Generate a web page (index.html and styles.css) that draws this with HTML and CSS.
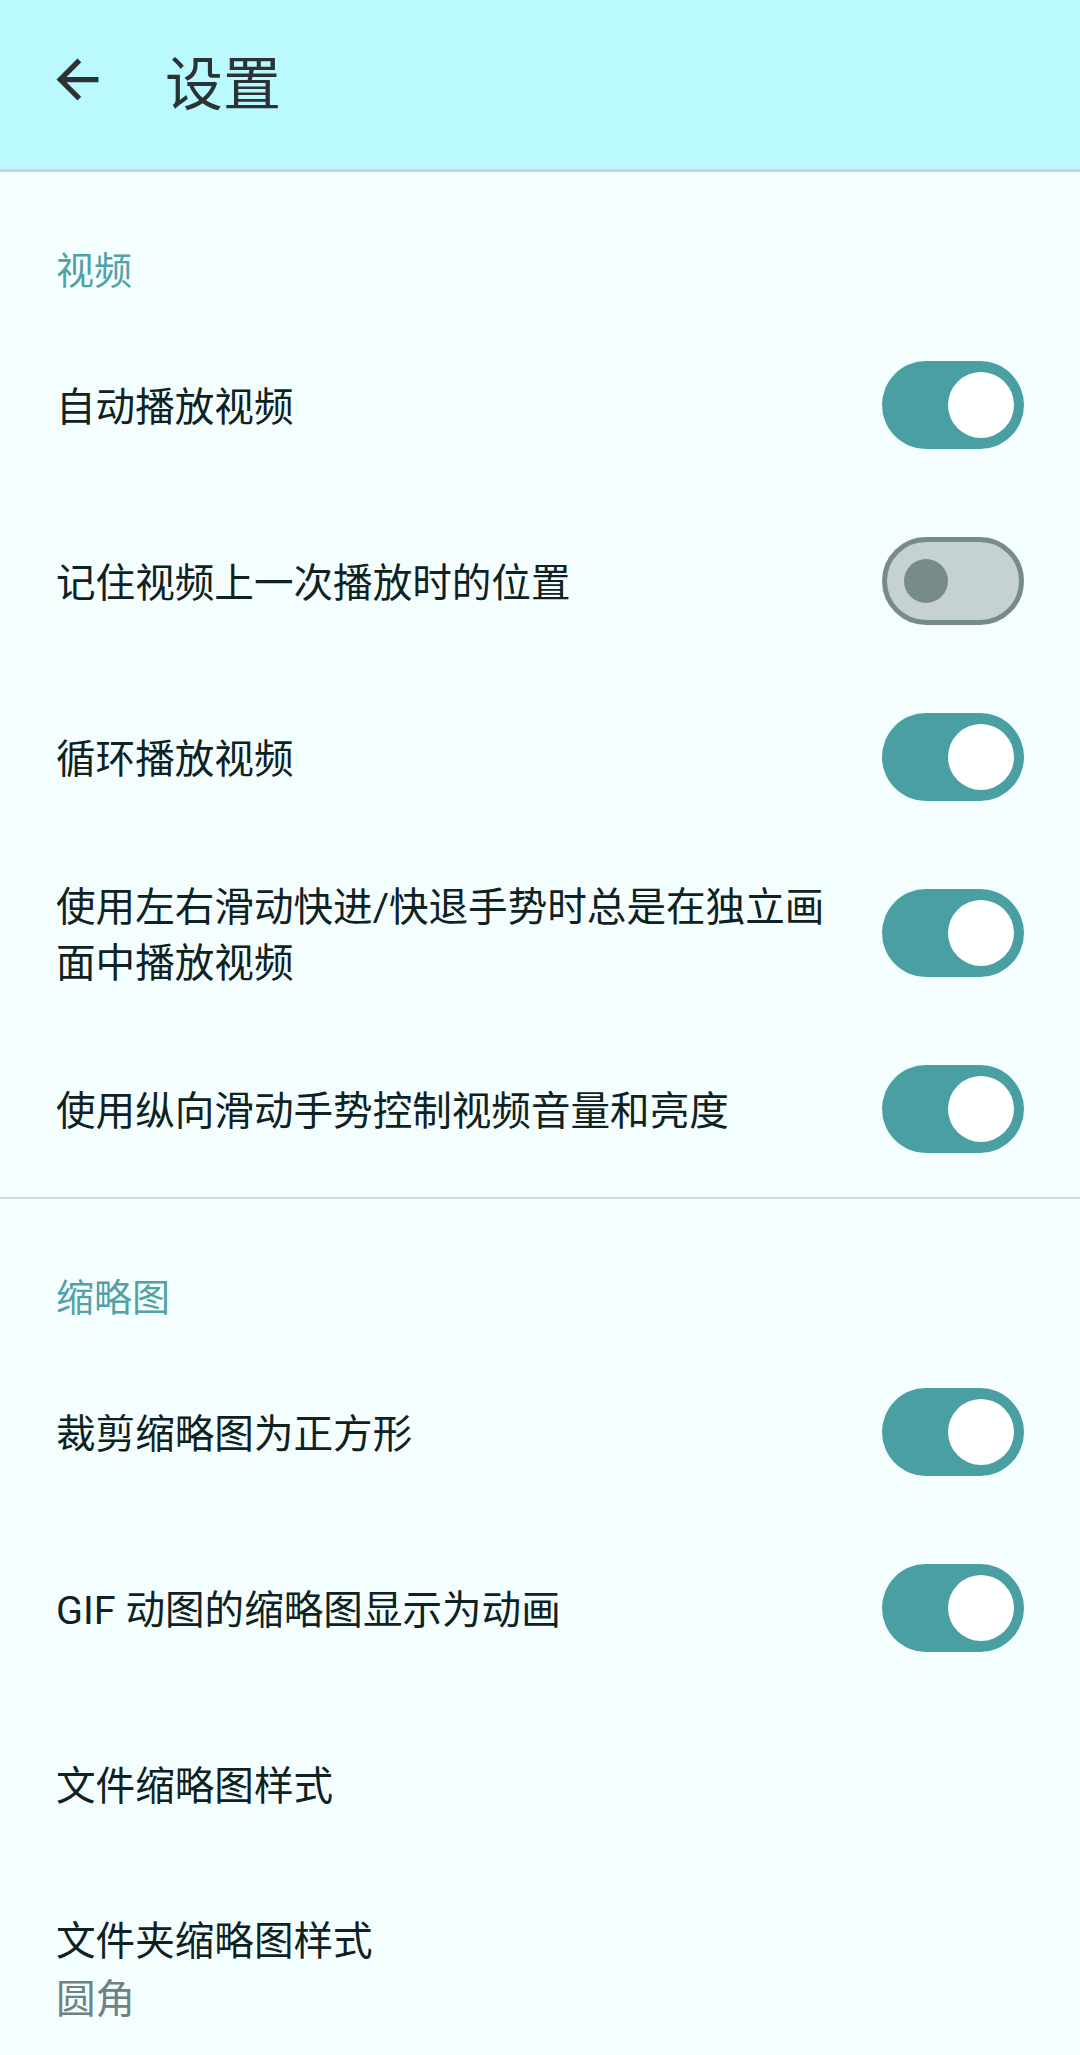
FILE: index.html
```html
<!DOCTYPE html>
<html lang="zh-CN">
<head>
    <meta charset="UTF-8">
    <meta name="viewport" content="width=device-width, initial-scale=1.0">
    <title>设置</title>
    <link rel="stylesheet" href="styles.css">
</head>
<body>
    <div class="toolbar">
        <button class="back" aria-label="返回">
            <svg viewBox="0 0 24 24" width="63" height="63"><path d="M20 11H7.83l5.59-5.59L12 4l-8 8 8 8 1.41-1.41L7.83 13H20v-2z" fill="#2d3333"/></svg>
        </button>
        <h1 class="title">设置</h1>
    </div>

    <div class="section">
        <div class="section-title">视频</div>
        <div class="row">
            <div class="label">自动播放视频</div>
            <div class="switch on"><span class="thumb"></span></div>
        </div>
        <div class="row">
            <div class="label">记住视频上一次播放时的位置</div>
            <div class="switch"><span class="thumb"></span></div>
        </div>
        <div class="row">
            <div class="label">循环播放视频</div>
            <div class="switch on"><span class="thumb"></span></div>
        </div>
        <div class="row">
            <div class="label">使用左右滑动快进/快退手势时总是在独立画面中播放视频</div>
            <div class="switch on"><span class="thumb"></span></div>
        </div>
        <div class="row">
            <div class="label">使用纵向滑动手势控制视频音量和亮度</div>
            <div class="switch on"><span class="thumb"></span></div>
        </div>
    </div>

    <div class="section">
        <div class="section-title">缩略图</div>
        <div class="row">
            <div class="label">裁剪缩略图为正方形</div>
            <div class="switch on"><span class="thumb"></span></div>
        </div>
        <div class="row">
            <div class="label">GIF 动图的缩略图显示为动画</div>
            <div class="switch on"><span class="thumb"></span></div>
        </div>
        <div class="row">
            <div class="label">文件缩略图样式</div>
        </div>
        <div class="row tall">
            <div class="label">文件夹缩略图样式
                <div class="summary">圆角</div>
            </div>
        </div>
    </div>
</body>
</html>
```

FILE: styles.css
```css
body {
    margin: 0;
    padding: 0;
    background-color: #f5feff;
    font-family: Roboto, "Noto Sans CJK SC", sans-serif;
    color: #0f2222;
    overflow: hidden;
}
.toolbar {
    display: flex;
    align-items: center;
    height: 172px;
    background-color: #bafaff;
    border-bottom: 3px solid #c8d5d6;
    box-sizing: border-box;
}
.back {
    background: none;
    border: none;
    padding: 0;
    margin: -10px 0 0 46px;
    width: 63px;
    height: 63px;
    display: flex;
}
.title {
    margin: -10px 0 0 56px;
    font-size: 58px;
    font-weight: 400;
    color: #2b3334;
}
.section {
    border-bottom: 2px solid #d3dada;
}
.section:last-child {
    border-bottom: none;
}
.section-title {
    padding: 73px 56px 0 56px;
    height: 72px;
    line-height: 52px;
    font-size: 38px;
    color: #52a1a6;
}
.row {
    display: flex;
    align-items: center;
    justify-content: space-between;
    min-height: 176px;
    padding: 0 56px;
    box-sizing: border-box;
}
.label {
    width: 795px;
    padding-top: 5px;
    font-size: 39.6px;
    line-height: 56px;
}
.row.tall {
    min-height: 0;
    padding-top: 37px;
}
.summary {
    margin-top: 2px;
    color: #6d8283;
}
.switch {
    position: relative;
    width: 142px;
    height: 88px;
    border-radius: 44px;
    box-sizing: border-box;
    background-color: #c6d1d2;
    border: 5px solid #788b8b;
    flex-shrink: 0;
}
.switch .thumb {
    position: absolute;
    left: 17px;
    top: 17px;
    width: 44px;
    height: 44px;
    border-radius: 50%;
    background-color: #788b8b;
}
.switch.on {
    background-color: #4a9fa3;
    border: none;
}
.switch.on .thumb {
    left: 66px;
    top: 11px;
    width: 66px;
    height: 66px;
    background-color: #ffffff;
}
```
